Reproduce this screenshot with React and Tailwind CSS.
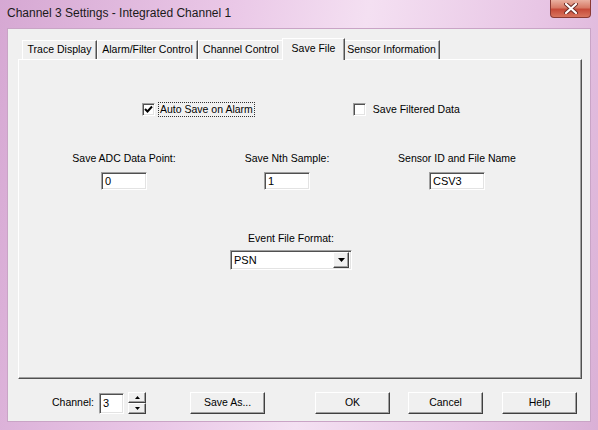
const raised =
  "border border-t-white border-l-white border-b-[#404040] border-r-[#404040] shadow-[inset_-1px_-1px_0_#a0a0a0] bg-[#f0f0f0]";
const sunken =
  "border border-t-[#a0a0a0] border-l-[#a0a0a0] border-b-white border-r-white shadow-[inset_1px_1px_0_#505050,inset_-1px_-1px_0_#e3e3e3] bg-white";

function Tab({ label, width, active }) {
  if (active) {
    return (
      <div
        className={`relative z-10 -mb-px h-[22px] ${width} -mx-[2px] flex items-start justify-center pt-[2px] bg-[#f0f0f0] border-t border-l border-t-white border-l-white border-r border-r-[#505050] shadow-[inset_-1px_0_0_#a0a0a0]`}
      >
        {label}
      </div>
    );
  }
  return (
    <div
      className={`h-[19px] ${width} flex items-center justify-center border-t border-l border-t-white border-l-white border-r border-r-[#505050] shadow-[inset_-1px_0_0_#a0a0a0] bg-[#f0f0f0]`}
    >
      {label}
    </div>
  );
}

function Check({ checked }) {
  return (
    <div className={`w-[13px] h-[13px] ${sunken} flex items-center justify-center`}>
      {checked && (
        <svg width="9" height="9" viewBox="0 0 9 9">
          <path d="M1 4 L3.5 6.5 L8 1.5" fill="none" stroke="#000" strokeWidth="2" />
        </svg>
      )}
    </div>
  );
}

function Button({ children, className = "" }) {
  return (
    <div className={`w-[75px] h-[22px] ${raised} flex items-center justify-center ${className}`}>
      {children}
    </div>
  );
}

function Field({ label, value, width }) {
  return (
    <div className="w-[140px] flex flex-col items-center">
      <div className="h-[13px] leading-[13px]">{label}</div>
      <div className={`mt-[7px] h-[18px] ${width} ${sunken} pl-[3px] leading-[16px] text-[11px]`}>{value}</div>
    </div>
  );
}

export default function App() {
  return (
    <div className="w-[598px] h-[430px] flex flex-col overflow-hidden bg-[linear-gradient(100deg,#d6a8d3_0%,#eac8e7_35%,#f4e0f2_55%,#e8c6e5_80%,#dab0d6_100%)] font-['Liberation_Sans',Arial,sans-serif] text-[10.5px] text-black">
      {/* title bar */}
      <div className="h-[28px] flex items-start justify-between pl-[7px] pr-[7px]">
        <div className="pt-[5px] text-[12px] leading-[16px] text-[#1a1a1a]">
          Channel 3 Settings - Integrated Channel 1
        </div>
        <div className="w-[41px] h-[18px] rounded-b-[4px] border border-t-0 border-[#8a3a34] bg-[linear-gradient(#eab0a0_0%,#d77a66_45%,#c64a38_55%,#d8745e_100%)] flex items-center justify-center">
          <svg width="14" height="11" viewBox="0 0 14 11">
            <path d="M2 1 L12 10 M12 1 L2 10" stroke="#6a2a24" strokeWidth="4" strokeLinecap="round" />
            <path d="M2 1 L12 10 M12 1 L2 10" stroke="#fff" strokeWidth="2.2" strokeLinecap="round" />
          </svg>
        </div>
      </div>

      {/* client */}
      <div className="mx-[7px] mb-[8px] flex-1 border border-[#c9a4c6] bg-[#f0f0f0] flex flex-col">
        <div className="pt-[11px] pl-[10px] pr-[8px] flex flex-col">
          {/* tabs */}
          <div className="flex items-end pl-[4px] h-[19px]">
            <Tab label="Trace Display" width="w-[75px]" />
            <Tab label="Alarm/Filter Control" width="w-[101px]" />
            <Tab label="Channel Control" width="w-[86px]" />
            <Tab label="Save File" width="w-[63px]" active />
            <Tab label="Sensor Information" width="w-[97px]" />
          </div>
          {/* panel */}
          <div className="h-[320px] border border-t-white border-l-white border-b-[#505050] border-r-[#505050] shadow-[inset_-1px_-1px_0_#a0a0a0] bg-[#f0f0f0] flex flex-col">
            <div className="mt-[41px] flex items-center h-[16px]">
              <div className="ml-[123px] flex items-center">
                <Check checked />
                <span className="ml-[3px] px-[1px] border border-dotted border-[#333] leading-[13px]">
                  Auto Save on Alarm
                </span>
              </div>
              <div className="ml-[98px] flex items-center">
                <Check />
                <span className="ml-[7px] leading-[13px]">Save Filtered Data</span>
              </div>
            </div>

            <div className="mt-[35px] flex">
              <div className="ml-[35px]">
                <Field label="Save ADC Data Point:" value="0" width="w-[46px]" />
              </div>
              <div className="ml-[23px]">
                <Field label="Save Nth Sample:" value="1" width="w-[46px]" />
              </div>
              <div className="ml-[30px]">
                <Field label="Sensor ID and File Name" value="CSV3" width="w-[56px]" />
              </div>
            </div>

            <div className="mt-[42px] flex flex-col items-center w-[140px] ml-[202px]">
              <div className="h-[13px] leading-[13px]">Event File Format:</div>
              <div className={`mt-[5px] w-[122px] h-[20px] ${sunken} flex items-center justify-between pl-[3px] pr-[2px] text-[11px]`}>
                <span>PSN</span>
                <div className={`w-[16px] h-[16px] ${raised} flex items-center justify-center`}>
                  <svg width="7" height="4" viewBox="0 0 7 4">
                    <path d="M0 0 H7 L3.5 4 Z" fill="#000" />
                  </svg>
                </div>
              </div>
            </div>
          </div>
        </div>

        {/* bottom row */}
        <div className="mt-[13px] flex items-center h-[22px]">
          <span className="ml-[44px]">Channel:</span>
          <div className={`ml-[5px] w-[25px] h-[21px] ${sunken} pl-[3px] leading-[19px] text-[11px]`}>3</div>
          <div className="ml-[4px] w-[18px] h-[22px] flex flex-col">
            <div className={`h-[11px] ${raised} flex items-center justify-center`}>
              <svg width="5" height="3" viewBox="0 0 5 3">
                <path d="M0 3 H5 L2.5 0 Z" fill="#000" />
              </svg>
            </div>
            <div className={`h-[11px] ${raised} flex items-center justify-center`}>
              <svg width="5" height="3" viewBox="0 0 5 3">
                <path d="M0 0 H5 L2.5 3 Z" fill="#000" />
              </svg>
            </div>
          </div>
          <Button className="ml-[44px]">Save As...</Button>
          <Button className="ml-[50px]">OK</Button>
          <Button className="ml-[18px]">Cancel</Button>
          <Button className="ml-[19px]">Help</Button>
        </div>
      </div>
    </div>
  );
}
